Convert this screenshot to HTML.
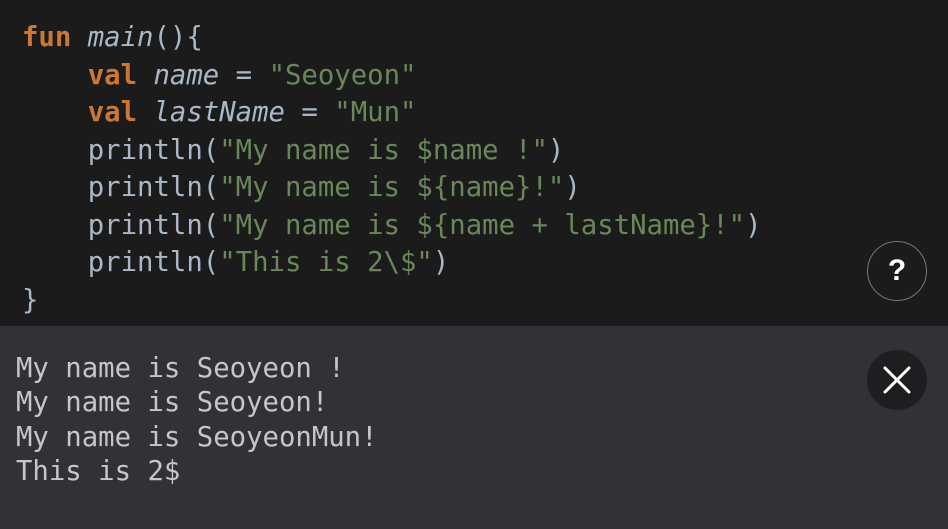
<!DOCTYPE html>
<html><head><style>
html,body{margin:0;padding:0;width:948px;height:529px;overflow:hidden;background:#313235}
.top{position:absolute;left:0;top:0;width:948px;height:326px;background:#1b1b1b}
pre{margin:0;font-family:"DejaVu Sans Mono","Liberation Mono",monospace;font-size:27.3px;white-space:pre}
.code{position:absolute;left:22px;top:19px;line-height:37.5px;color:#a9b7c6}
.k{color:#cc7832;font-weight:bold}
.s{color:#6a8759}
.i{font-style:italic}
.out{position:absolute;left:16px;top:352px;line-height:34.3px;color:#c4c6c8}
.q{position:absolute;left:867px;top:241px;width:58px;height:58px;border:1px solid #777;border-radius:50%;color:#fff;font:bold 30px "Liberation Sans",sans-serif;text-align:center;line-height:58px}
.x{position:absolute;left:867px;top:350px;width:60px;height:60px;border-radius:50%;background:#1d1e20}
</style></head><body>
<div class="top"></div>
<pre class="code"><span class="k">fun</span> <span class="i">main</span>(){
    <span class="k">val</span> <span class="i">name</span> = <span class="s">"Seoyeon"</span>
    <span class="k">val</span> <span class="i">lastName</span> = <span class="s">"Mun"</span>
    println(<span class="s">"My name is $name !"</span>)
    println(<span class="s">"My name is ${name}!"</span>)
    println(<span class="s">"My name is ${name + lastName}!"</span>)
    println(<span class="s">"This is 2\$"</span>)
}</pre>
<div class="q">?</div>
<pre class="out">My name is Seoyeon !
My name is Seoyeon!
My name is SeoyeonMun!
This is 2$</pre>
<div class="x"><svg width="60" height="60" viewBox="0 0 60 60"><path d="M18 18L42 42M42 18L18 42" stroke="#fff" stroke-width="3" stroke-linecap="round"/></svg></div>
</body></html>
